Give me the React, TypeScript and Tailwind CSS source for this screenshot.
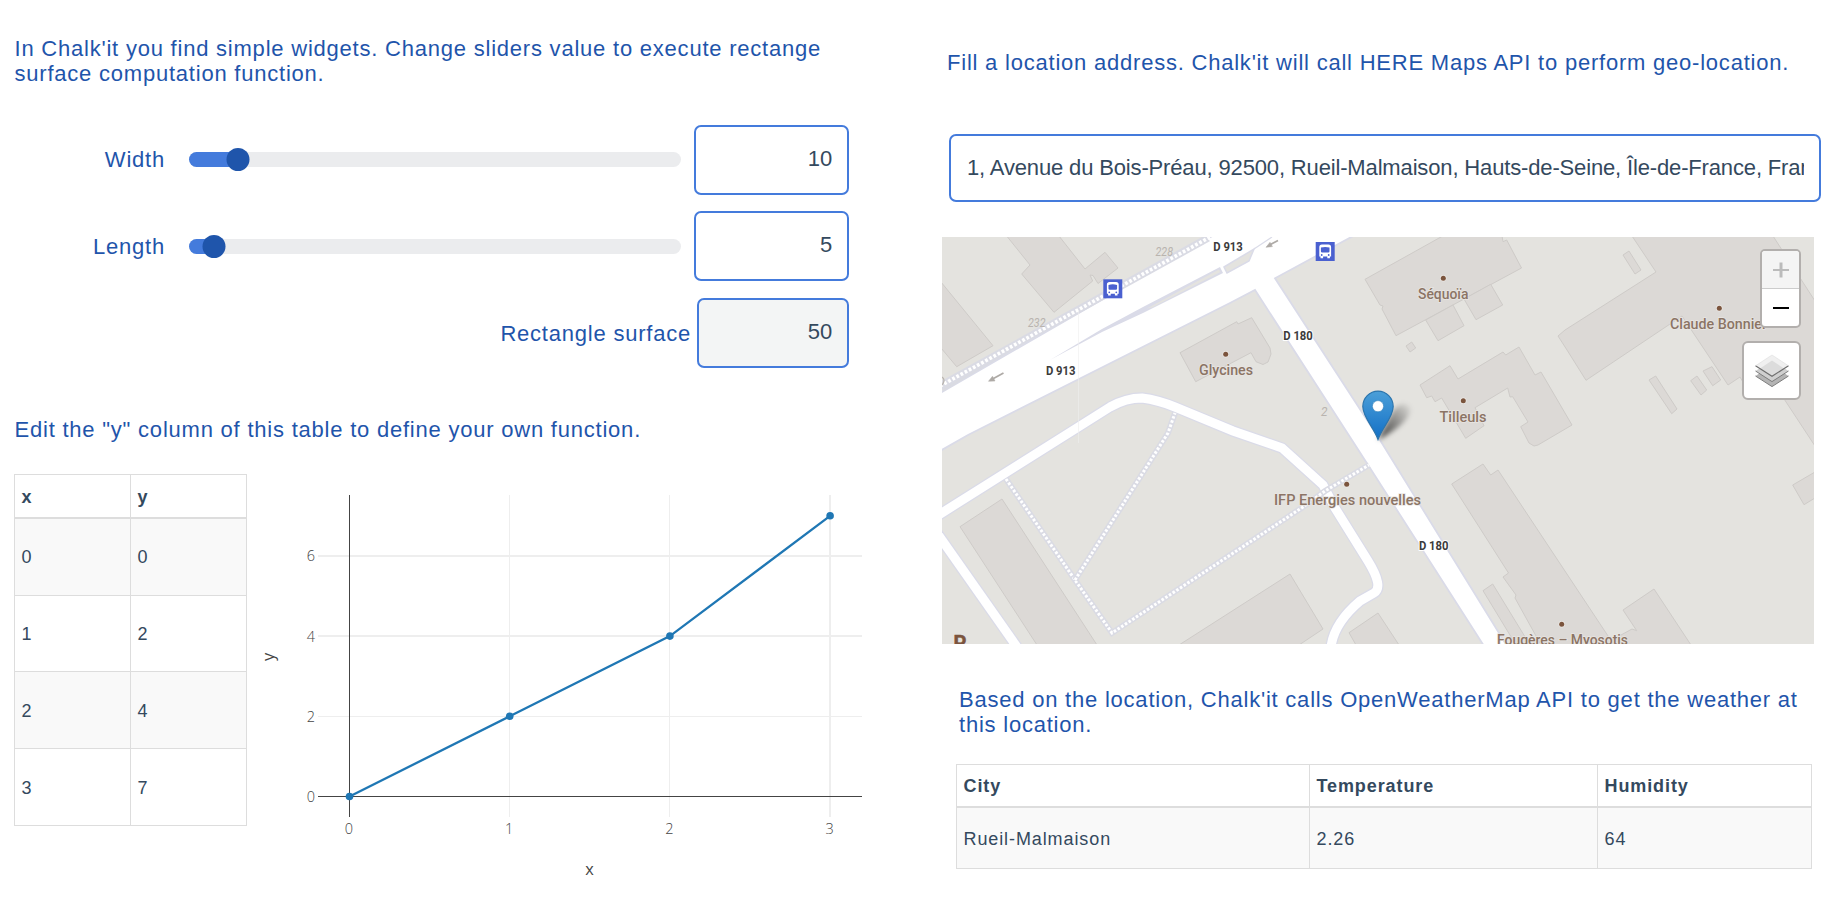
import React from "react";

const FONT = "font-['Liberation_Sans',Arial,sans-serif]";
const HEADING = "text-[22px] leading-[25px] tracking-[0.78px] text-[#1f55ab]";
const FIELD =
  "rounded-[7px] border-2 border-[#447bdc] text-[22px] tracking-[-0.15px] text-[#34495e] outline-none";

function Slider({
  label,
  value,
  max,
  align,
}: {
  label: string;
  value: number;
  max: number;
  align: string;
}) {
  const ratio = value / max;
  return (
    <div className="flex h-[70px] w-[849px] items-start">
      <div className={"flex items-center " + align}>
        <div className={"w-[165px] text-right " + HEADING}>{label}</div>
        <div className="relative ml-6 h-[15px] w-[492px] rounded-full bg-[#ebecee]">
          <div
            className="h-full rounded-full bg-[#447bdc]"
            style={{ width: `${ratio * 100}%` }}
          />
          <div
            className="absolute -top-1 size-[23px] -translate-x-1/2 rounded-full bg-[#1f55ab]"
            style={{ left: `${ratio * 100}%` }}
          />
        </div>
      </div>
      <input
        readOnly
        value={value}
        className={"ml-[13px] h-[70px] w-[155px] bg-white px-[15px] pb-0.5 text-right " + FIELD}
      />
    </div>
  );
}

const ROWS = [
  { x: 0, y: 0, tall: "h-[77px]", pad: "pt-0" },
  { x: 1, y: 2, tall: "h-[76px]", pad: "pt-0" },
  { x: 2, y: 4, tall: "h-[77px]", pad: "pt-0.5" },
  { x: 3, y: 7, tall: "h-[77px]", pad: "pt-0.5" },
];

const CELL = "border-r border-b border-[#ddd] px-[6.5px] text-left ";
const TABLE =
  "table-fixed border-separate border-spacing-0 border-t border-l border-[#ddd] text-[18px] leading-[22px] tracking-[0.9px] text-[#34495e]";

function FunctionTable() {
  return (
    <table className={"w-[233px] shrink-0 " + TABLE}>
      <thead>
        <tr className="h-11">
          <th className={CELL + "border-b-2 pt-0.5"}>x</th>
          <th className={CELL + "border-b-2 pt-0.5"}>y</th>
        </tr>
      </thead>
      <tbody>
        {ROWS.map((r) => (
          <tr key={r.x} className={r.tall + " odd:bg-[#f9f9f9]"}>
            <td className={CELL + r.pad}>{r.x}</td>
            <td className={CELL + r.pad}>{r.y}</td>
          </tr>
        ))}
      </tbody>
    </table>
  );
}

const px = (x: number) => 102.5 + x * 160.2;
const py = (y: number) => 322.5 - y * 40.1;

function Chart() {
  return (
    <svg
      width="640"
      height="420"
      viewBox="0 0 640 420"
      className="shrink-0 font-['Open_Sans',sans-serif]"
      fill="#444"
    >
      <g fill="#eee">
        <rect x="262" y="21" width="1" height="322" />
        <rect x="422" y="21" width="1" height="322" />
        <rect x="582" y="21" width="2" height="322" />
        <rect x="71" y="81" width="544" height="2" />
        <rect x="71" y="161" width="544" height="2" />
        <rect x="71" y="242" width="544" height="1" />
      </g>
      <rect x="102" y="21" width="1" height="322" />
      <rect x="71" y="322" width="544" height="1" />
      <polyline
        points={ROWS.map((r) => `${px(r.x)},${py(r.y)}`).join(" ")}
        fill="none"
        stroke="#1f77b4"
        strokeWidth="2.3"
      />
      {ROWS.map((r) => (
        <circle key={r.x} cx={px(r.x)} cy={py(r.y)} r="3.8" fill="#1f77b4" />
      ))}
      <g fontSize="14.5" fontWeight="300">
        {[0, 2, 4, 6].map((v) => (
          <text key={v} x="68" y={py(v) + 5.5} textAnchor="end">
            {v}
          </text>
        ))}
        {[0, 1, 2, 3].map((v) => (
          <text key={v} x={px(v) - 0.5} y="360" textAnchor="middle">
            {v}
          </text>
        ))}
      </g>
      <g fontSize="16.3" textAnchor="middle">
        <text x="342.5" y="401">
          x
        </text>
        <text transform="translate(26.5 183) rotate(-90)">y</text>
      </g>
    </svg>
  );
}

const BUILDINGS = [
  "64.7,-1 88,28 79.7,37 112,75.3 150.7,44 148,38 151,38.5 156,46.5 176,31 163,15.3 143,32 117,-1",
  "-1,45 51,108.7 14.7,129.7 -1,111",
  "238,115.7 294.7,84.7 296,87 309.7,80.7 328,111 329,117 326,125 321,127.5 314,124.7 309,115.7 253.7,144.7",
  "423,42.3 500.7,-1 560,-1 561,4.7 564.7,3 579.5,31 454,98.7 440,72 441,69 438,68",
  "483.7,83 511,68 522,88.7 496,103.7",
  "522,62 548.7,47.3 560.7,68 534,82.7",
  "464,109 469.7,105 473.7,111 468,115",
  "478,148 508,128.7 516,142 561,115 563.7,118 577,110 593,138 599,135 630,188 596,208 592,209 587,206 578.7,189.7 586,185 570.7,159.7 568,160 565.7,151 533,170.7 542,188.7 523.7,201.3 499.7,161 493,164.7 489.7,159 484.7,160.7",
  "690,-1 714,35 623,93 616,99 625,113 644,143.3 740,79 786,148 798,140 801,145 823,133 873,209 873,64 831,-1",
  "681,18 687,14 699,33 693,37",
  "707,143 713.7,139 735,172 729.7,176.7",
  "748.7,143.7 755,139 764.7,153 759,158",
  "761,134 770,129.7 778.7,143 770.7,148.7",
  "18,289.7 60,262 155,408 95,408",
  "237,408 348,337 381,392 357,408",
  "407,395.7 436,376 457,408 414,408",
  "509.7,247 541,227 548.7,238 556,233 672,408 599,408 573,361 574,358 561,340 566.5,336",
  "681,373 712,352 749,408 672,408 669,403 679,398 690,392 694.7,393.7",
  "541,353.7 550.7,347 588,408 574,408",
  "873,235 850.7,248 862,267.7 873,261",
];

const DRIVES = [
  "M-5,279 L130,194 L168,170 Q184,161 200,161 Q216,163 233,170 L291,194 L340,211 L381,248 L393,271 L426,324 Q442,350 432,356 L418,364 Q392,386 389,410",
  "M-5,296 L75,410",
];

const PATHS = [
  "M64,242 L133,343 L170,396 L361,270 L383,254 L427,228",
  "M133,343 L226,196 L233,176",
];

const PLACES = [
  { name: "Séquoïa", x: 476, y: 61.5, w: 50.5, dx: 501.3, dy: 41.3 },
  { name: "Glycines", x: 257, y: 137.8, w: 54, dx: 283.7, dy: 117.3 },
  { name: "Tilleuls", x: 497.5, y: 184.5, w: 47, dx: 521.3, dy: 163.7 },
  { name: "Claude Bonnier", x: 728, y: 92, w: 97, dx: 777.3, dy: 71.3 },
  { name: "IFP Energies nouvelles", x: 332, y: 268, w: 147, dx: 404.7, dy: 247.3 },
  { name: "Fougères – Myosotis", x: 555, y: 408, w: 131, dx: 619.7, dy: 387.3 },
];

const ROADS = [
  { name: "D 913", x: 104, y: 138 },
  { name: "D 913", x: 271.3, y: 13.5 },
  { name: "D 180", x: 341.3, y: 102.5 },
  { name: "D 180", x: 477, y: 313 },
];

function BusStop({ x, y }: { x: number; y: number }) {
  return (
    <g transform={`translate(${x} ${y})`}>
      <rect width="19" height="19" fill="#4a60d0" />
      <path
        d="M6.2,2.6 h6.6 q2.6,0 2.6,2.6 v9.2 h-1.2 v1.8 h-2.6 v-1.8 h-4.2 v1.8 h-2.6 v-1.8 h-1.2 v-9.2 q0,-2.6 2.6,-2.6 z"
        fill="#fff"
      />
      <path d="M5.2,5.6 q4.3,-1.2 8.6,0 v3.6 q0,1.2 -1.2,1.2 h-6.2 q-1.2,0 -1.2,-1.2 z" fill="#4a60d0" />
      <circle cx="6" cy="13" r="0.9" fill="#4a60d0" />
      <circle cx="13" cy="13" r="0.9" fill="#4a60d0" />
    </g>
  );
}

function MapDrawing() {
  return (
    <svg width="872" height="407" viewBox="0 0 872 407" className="font-[Roboto,sans-serif]">
      <defs>
        <linearGradient id="pin" x1="0" y1="0" x2="0" y2="1">
          <stop offset="0" stopColor="#4b9fd8" />
          <stop offset="1" stopColor="#126fc6" />
        </linearGradient>
        <linearGradient id="shade" x1="0" y1="1" x2="1" y2="0">
          <stop offset="0" stopColor="#000" stopOpacity="0.75" />
          <stop offset="0.5" stopColor="#000" stopOpacity="0.4" />
          <stop offset="1" stopColor="#000" stopOpacity="0.02" />
        </linearGradient>
        <filter id="soft" x="-50%" y="-50%" width="200%" height="200%">
          <feGaussianBlur stdDeviation="2.6" />
        </filter>
      </defs>
      <rect width="872" height="407" fill="#e4e3df" />
      <g fill="#dcd9d6" stroke="#cecbc8" strokeWidth="1">
        {BUILDINGS.map((points) => (
          <polygon key={points} points={points} />
        ))}
      </g>
      {DRIVES.map((d) => (
        <path key={d} d={d} fill="none" stroke="#dadbe8" strokeWidth="11.5" />
      ))}
      <path
        d="M-2,156 L272,-2 L413,-2 L333,41.3 L438,203 L565,409 L542,409 L428,231 L313,53 L288,66 L26,198 L-2,214 Z"
        fill="#fff"
        stroke="#dadbe8"
        strokeWidth="1.8"
      />
      {DRIVES.map((d) => (
        <path key={d} d={d} fill="none" stroke="#fff" strokeWidth="9" />
      ))}
      <path d="M0,150 L130,76 L2,153 Z" fill="#dadbe2" stroke="#dadbe2" strokeWidth="2" />
      {PATHS.map((d) => (
        <g key={d} fill="none">
          <path d={d} stroke="#dadbe4" strokeWidth="6" />
          <path d={d} stroke="#fff" strokeWidth="3" strokeDasharray="2.6 1.8" />
        </g>
      ))}
      <g fill="none">
        <path d="M-2,149 L266,1" stroke="#dadbe4" strokeWidth="7.5" />
        <path d="M-2,149 L270,-1" stroke="#fff" strokeWidth="3.6" strokeDasharray="2.8 1.9" />
      </g>
      <path d="M108,123 L160,92 L201,70 L278,30 L281,36 L201,76 L160,95 Z" fill="#dadbe8" />
      <path d="M205,71.5 L277,32.5 L278.5,35 L210,70.5 Z" fill="#e4e3df" />
      <path
        d="M282,30 L312,12 L307,24 L285,36 Z"
        fill="#e4e3df"
        stroke="#dadbe8"
        strokeWidth="1.5"
      />
      <path d="M312,12 L330,0" stroke="#dadbe8" strokeWidth="1.2" />
      <path d="M136.5,73 V206" stroke="#eeeeee" strokeWidth="0.6" />

      <g stroke="#aeaaa6" strokeWidth="1.7" fill="#aeaaa6">
        <path d="M61.5,136 L51,141.8" />
        <path d="M46.5,144.3 L50.5,139.2 L53,144 Z" strokeWidth="0.5" />
        <path d="M336,3.5 L328,7.8" />
        <path d="M324,10.3 L328,5.3 L330.4,9.6 Z" strokeWidth="0.5" />
      </g>

      <g fontSize="13" fontStyle="italic" fill="#b9b4af">
        <text x="213.5" y="19" textLength="17.5" lengthAdjust="spacingAndGlyphs">
          228
        </text>
        <text x="86" y="90" textLength="17.5" lengthAdjust="spacingAndGlyphs">
          232
        </text>
        <text x="379" y="179" textLength="6.5" lengthAdjust="spacingAndGlyphs">
          2
        </text>
      </g>
      <path d="M0,140 Q4,143 0,148" fill="none" stroke="#b9b4af" strokeWidth="1.3" />

      <g
        fontSize="11.9"
        fontWeight="700"
        fill="#3b3b3b"
        stroke="#fff"
        strokeWidth="2"
        paintOrder="stroke"
      >
        {ROADS.map((r) => (
          <text key={r.x} x={r.x} y={r.y} textLength="29.5" lengthAdjust="spacingAndGlyphs">
            {r.name}
          </text>
        ))}
      </g>

      <g fontSize="15" fontWeight="500">
        {PLACES.map((p) => (
          <g key={p.name}>
            <circle cx={p.dx} cy={p.dy} r="3.2" fill="#ece9e6" />
            <circle cx={p.dx} cy={p.dy} r="2.5" fill="#7b543d" />
            <text
              x={p.x}
              y={p.y}
              textLength={p.w}
              lengthAdjust="spacingAndGlyphs"
              fill="#8b7465"
              stroke="#e9e6e3"
              strokeWidth="1.5"
              paintOrder="stroke"
            >
              {p.name}
            </text>
          </g>
        ))}
      </g>
      <text x="11.5" y="413" fontSize="20" fontWeight="700" fill="#7b543d" stroke="#7b543d" strokeWidth="0.5">
        P
      </text>

      <BusStop x={161.3} y={42.3} />
      <BusStop x={373.7} y={5} />

      <path
        d="M436,203 L450,175 Q460,162 468,170 Q471,184 436,203 Z"
        fill="url(#shade)"
        filter="url(#soft)"
      />
      <path
        d="M436,202.5 C432,191 420.8,180 420.8,169.5 A15.2,15.4 0 0 1 451.2,169.5 C451.2,180 440,191 436,202.5 Z"
        fill="url(#pin)"
        stroke="#2c75ad"
        strokeWidth="1.2"
      />
      <circle cx="436" cy="169.2" r="5.6" fill="#fff" stroke="#2f7fba" strokeWidth="0.6" />
    </svg>
  );
}

function LayersIcon() {
  return (
    <svg width="34" height="34" viewBox="0 0 34 34">
      <path d="M0.5,22 L17,11 L33.5,22 L17,32.6 Z" fill="#b4b4b4" />
      <path d="M0.5,22 L17,32.6 L33.5,22" fill="none" stroke="#7d7d7d" strokeWidth="1" />
      <path d="M0.5,17 L17,6 L33.5,17 L17,27.6 Z" fill="#cfcfcf" />
      <path d="M0.5,17 L17,27.6 L33.5,17" fill="none" stroke="#7d7d7d" strokeWidth="1" />
      <path d="M0.5,11.8 L17,1 L33.5,11.8 L17,22.3 Z" fill="#f0f0f0" />
      <path d="M5,14.5 L17,6.5 L29,14.5 L17,22.3 Z" fill="#dcdcdc" />
      <path d="M0.5,11.8 L17,22.3 L33.5,11.8" fill="none" stroke="#6d6d6d" strokeWidth="1.1" />
      <path d="M0.5,11.8 L17,1 L33.5,11.8" fill="none" stroke="#dedede" strokeWidth="0.6" />
    </svg>
  );
}

function MapView() {
  return (
    <div className="relative h-[407px] w-[872px] overflow-hidden">
      <MapDrawing />
      <div className="absolute top-3 right-[13px] flex flex-col items-end gap-[13px]">
        <div className="w-[41px] overflow-hidden rounded-[5px] border-2 border-[#b2afad] bg-white">
          <div className="flex h-[38px] items-center justify-center border-b border-[#ccc] bg-[#f4f4f4]">
            <svg width="16" height="16" viewBox="0 0 16 16" fill="#bbb">
              <rect x="0" y="7" width="16" height="2" />
              <rect x="6.5" y="0.5" width="3" height="15" />
            </svg>
          </div>
          <div className="flex h-[37px] items-center justify-center">
            <div className="h-0.5 w-4 bg-black" />
          </div>
        </div>
        <div className="flex size-[59px] items-center justify-center rounded-md border-2 border-[#b2afad] bg-white">
          <LayersIcon />
        </div>
      </div>
    </div>
  );
}

export default function App() {
  return (
    <main className={"flex h-[924px] w-[1830px] overflow-hidden bg-white " + FONT}>
      <section className="flex w-[942px] shrink-0 flex-col pt-9">
        <p className={"ml-[14.5px] w-[822px] " + HEADING}>
          In Chalk'it you find simple widgets. Change sliders value to execute rectange surface
          computation function.
        </p>
        <div className="mt-[39px] flex flex-col gap-4">
          <Slider label="Width" value={10} max={100} align="pt-[22px]" />
          <Slider label="Length" value={5} max={100} align="pt-[23px]" />
        </div>
        <div className="mt-[17px] flex w-[849px] items-center justify-end">
          <span className={HEADING}>Rectangle surface</span>
          <input
            readOnly
            value={50}
            className={"ml-1.5 h-[70px] w-[152px] bg-[#f3f5f5] px-[15px] pb-0.5 text-right " + FIELD}
          />
        </div>
        <p className={"mt-[49px] ml-[14.5px] " + HEADING}>
          Edit the "y" column of this table to define your own function.
        </p>
        <div className="mt-8 ml-[14px] flex items-start">
          <FunctionTable />
          <Chart />
        </div>
      </section>

      <section className="flex w-[888px] flex-col pt-[50px]">
        <p className={"ml-[5px] whitespace-nowrap " + HEADING}>
          Fill a location address. Chalk'it will call HERE Maps API to perform geo-location.
        </p>
        <input
          readOnly
          value="1, Avenue du Bois-Préau, 92500, Rueil-Malmaison, Hauts-de-Seine, Île-de-France, France"
          className={"mt-[59px] ml-[7px] h-[68px] w-[872px] bg-white pr-[15px] pl-4 " + FIELD}
        />
        <div className="mt-[35px]">
          <MapView />
        </div>
        <p className={"mt-[43px] ml-[17px] w-[850px] " + HEADING}>
          Based on the location, Chalk'it calls OpenWeatherMap API to get the weather at
          <br />
          this location.
        </p>
        <table className={"mt-[27px] ml-[14px] w-[856px] " + TABLE}>
          <thead>
            <tr className="h-[43px]">
              <th className={CELL + "w-[353px] border-b-2"}>City</th>
              <th className={CELL + "w-[288px] border-b-2"}>Temperature</th>
              <th className={CELL + "border-b-2"}>Humidity</th>
            </tr>
          </thead>
          <tbody>
            <tr className="h-[61px] bg-[#f9f9f9]">
              <td className={CELL + "pt-0.5"}>Rueil-Malmaison</td>
              <td className={CELL + "pt-0.5"}>2.26</td>
              <td className={CELL + "pt-0.5"}>64</td>
            </tr>
          </tbody>
        </table>
      </section>
    </main>
  );
}
